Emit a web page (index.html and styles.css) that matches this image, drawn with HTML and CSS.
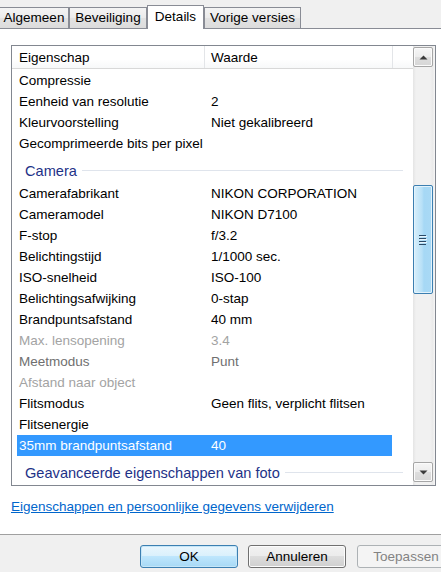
FILE: index.html
```html
<!DOCTYPE html>
<html>
<head>
<meta charset="utf-8">
<link rel="stylesheet" href="styles.css">
</head>
<body>
<div class="tabs">
  <div class="tab t1">Algemeen</div>
  <div class="tab t2">Beveiliging</div>
  <div class="tab active t3">Details</div>
  <div class="tab t4">Vorige versies</div>
</div>
<div class="panel">
  <div class="listbox">
    <div class="listmain">
      <div class="lhead">
        <div class="hc c1">Eigenschap</div>
        <div class="hc c2">Waarde</div>
        <div class="hc c3"></div>
      </div>
      <div class="rows">
        <div class="row"><span class="k">Compressie</span><span class="v"></span></div>
        <div class="row"><span class="k">Eenheid van resolutie</span><span class="v">2</span></div>
        <div class="row"><span class="k">Kleurvoorstelling</span><span class="v">Niet gekalibreerd</span></div>
        <div class="row"><span class="k">Gecomprimeerde bits per pixel</span><span class="v"></span></div>
        <div class="group"><span class="gt">Camera</span><i class="gline"></i></div>
        <div class="row"><span class="k">Camerafabrikant</span><span class="v">NIKON CORPORATION</span></div>
        <div class="row"><span class="k">Cameramodel</span><span class="v">NIKON D7100</span></div>
        <div class="row"><span class="k">F-stop</span><span class="v">f/3.2</span></div>
        <div class="row"><span class="k">Belichtingstijd</span><span class="v">1/1000 sec.</span></div>
        <div class="row"><span class="k">ISO-snelheid</span><span class="v">ISO-100</span></div>
        <div class="row"><span class="k">Belichtingsafwijking</span><span class="v">0-stap</span></div>
        <div class="row"><span class="k">Brandpuntsafstand</span><span class="v">40 mm</span></div>
        <div class="row dim"><span class="k">Max. lensopening</span><span class="v">3.4</span></div>
        <div class="row mid"><span class="k">Meetmodus</span><span class="v">Punt</span></div>
        <div class="row dim"><span class="k">Afstand naar object</span><span class="v"></span></div>
        <div class="row"><span class="k">Flitsmodus</span><span class="v">Geen flits, verplicht flitsen</span></div>
        <div class="row"><span class="k">Flitsenergie</span><span class="v"></span></div>
        <div class="row sel"><span class="k">35mm brandpuntsafstand</span><span class="v">40</span></div>
        <div class="group"><span class="gt">Geavanceerde eigenschappen van foto</span><i class="gline"></i></div>
      </div>
    </div>
    <div class="scrollbar">
      <div class="sbtn"><svg width="9" height="5" viewBox="0 0 9 5"><path d="M0.5 4.5 L4.5 0.5 L8.5 4.5 Z" fill="#3a3a3a"/></svg></div>
      <div class="track">
        <div class="thumb"><svg width="8" height="10" viewBox="0 0 8 10"><g fill="#2b4a66"><rect x="0" y="0" width="7" height="1"/><rect x="0" y="3" width="7" height="1"/><rect x="0" y="6" width="7" height="1"/><rect x="0" y="9" width="7" height="1"/></g><g fill="#e8f5fd"><rect x="1" y="1" width="7" height="1"/><rect x="1" y="4" width="7" height="1"/><rect x="1" y="7" width="7" height="1"/></g></svg></div>
      </div>
      <div class="sbtn"><svg width="9" height="5" viewBox="0 0 9 5"><path d="M0.5 0.5 L4.5 4.5 L8.5 0.5 Z" fill="#3a3a3a"/></svg></div>
    </div>
  </div>
  <a class="link" href="#">Eigenschappen en persoonlijke gegevens verwijderen</a>
</div>
<div class="footer">
  <button class="btn ok">OK</button>
  <button class="btn">Annuleren</button>
  <button class="btn disabled">Toepassen</button>
</div>
</body>
</html>
```
FILE: styles.css
```css
html, body {
  margin: 0;
  padding: 0;
}
body {
  width: 441px;
  height: 572px;
  overflow: hidden;
  background: #f0f0f0;
  font-family: "Liberation Sans", Arial, sans-serif;
  font-size: 13.5px;
  line-height: 15px;
  color: #000;
}
.tabs {
  display: flex;
  align-items: flex-end;
  height: 28px;
}
.tab {
  box-sizing: border-box;
  height: 21px;
  line-height: 20px;
  text-align: center;
  border: 1px solid #898c95;
  border-bottom: 0;
  background: linear-gradient(#f4f4f4, #ebebeb 50%, #e2e2e2 50%, #dcdcdc);
  white-space: nowrap;
}
.t1 { width: 70px; margin-left: -1px; }
.t2 { width: 78px; }
.t3 { width: 57px; }
.t4 { width: 97px; }
.tab.active {
  height: 24px;
  line-height: 21px;
  margin-bottom: -1px;
  background: #fff;
  position: relative;
  z-index: 1;
}
.panel {
  height: 489px;
  background: #fff;
  border-top: 1px solid #898c95;
  border-bottom: 1px solid #a0a0a0;
  padding: 16px 0 0 11px;
  box-sizing: content-box;
}
.listbox {
  box-sizing: border-box;
  width: 425px;
  height: 441px;
  border: 1px solid #828790;
  display: flex;
  background: #fff;
}
.listmain {
  flex: 1;
  min-width: 0;
  overflow: hidden;
}
.lhead {
  box-sizing: border-box;
  height: 23px;
  border-bottom: 1px solid #d8d8d8;
  display: flex;
  background: linear-gradient(#ffffff, #ffffff 60%, #f7f8f9);
}
.hc {
  box-sizing: border-box;
  padding-top: 1px;
  line-height: 21px;
  white-space: nowrap;
}
.c1 { width: 193px; padding-left: 7px; border-right: 1px solid #e3e5e8; }
.c2 { width: 188px; padding-left: 6px; border-right: 1px solid #e3e5e8; }
.c3 { flex: 1; }
.rows {
  padding-top: 1px;
}
.row {
  display: flex;
  height: 21px;
  line-height: 22px;
  margin-left: 5px;
  width: 375px;
  white-space: nowrap;
  overflow: hidden;
}
.k {
  box-sizing: border-box;
  width: 188px;
  padding-left: 2px;
}
.v {
  padding-left: 6px;
}
.row.dim { color: #a3a3a3; }
.row.mid { color: #6f6f6f; }
.row.sel {
  background: #3399ff;
  color: #fff;
}
.group {
  box-sizing: border-box;
  height: 29px;
  padding: 8px 10px 0 13px;
  display: flex;
  align-items: flex-start;
}
.gt {
  font-size: 14.6px;
  line-height: 18px;
  color: #1e3287;
  white-space: nowrap;
}
.gline {
  flex: 1;
  height: 1px;
  margin: 8px 0 0 5px;
  background: #dfe4ec;
}
.scrollbar {
  box-sizing: border-box;
  width: 22px;
  display: flex;
  flex-direction: column;
  padding: 1px 2px 3px 0;
  background: linear-gradient(to right, #e4e4e4 0, #f1f1f1 3px, #f1f1f1 17px, #e9e9e9 20px, #f4f4f4 21px);
}
.sbtn {
  box-sizing: border-box;
  width: 20px;
  height: 20px;
  border: 1px solid #a6a6a6;
  border-radius: 2px;
  background: linear-gradient(#f6f6f6, #ececec 50%, #dedede 50%, #d6d6d6);
  display: flex;
  align-items: center;
  justify-content: center;
  box-shadow: inset 0 0 0 1px #fbfbfb;
}
.track {
  flex: 1;
}
.thumb {
  box-sizing: border-box;
  margin-top: 118px;
  width: 20px;
  height: 109px;
  border: 1px solid #3c7fb1;
  border-radius: 2px;
  background: linear-gradient(to right, #d8effb, #b7e0f7 45%, #a6d8f5 55%, #a9d9f5);
  box-shadow: inset 0 0 0 1px #e3f3fc;
  display: flex;
  align-items: center;
  justify-content: center;
}
.link {
  display: inline-block;
  margin-top: 13px;
  color: #0066cc;
  text-decoration: underline;
  white-space: nowrap;
}
.footer {
  display: flex;
  padding: 10px 0 0 140px;
}
.btn {
  box-sizing: border-box;
  width: 98px;
  height: 23px;
  margin: 0 10px 0 0;
  padding: 0;
  border: 1px solid #707070;
  border-radius: 3px;
  font-family: "Liberation Sans", Arial, sans-serif;
  font-size: 13.5px;
  line-height: 21px;
  color: #000;
  background: linear-gradient(#f2f2f2, #ebebeb 50%, #dddddd 50%, #cfcfcf);
  box-shadow: inset 0 0 0 1px #fcfcfc;
  flex-shrink: 0;
}
.btn.ok {
  border-color: #3c7fb1;
  background: linear-gradient(#eaf6fd, #d9f0fc 50%, #bee6fd 50%, #a7d9f5);
  box-shadow: inset 0 0 0 1px #c5e6f8;
  margin-right: 10px;
}
.btn.disabled {
  margin-left: 1px;
  border-color: #adb2b5;
  background: #f4f4f4;
  color: #838383;
  box-shadow: none;
}
```
